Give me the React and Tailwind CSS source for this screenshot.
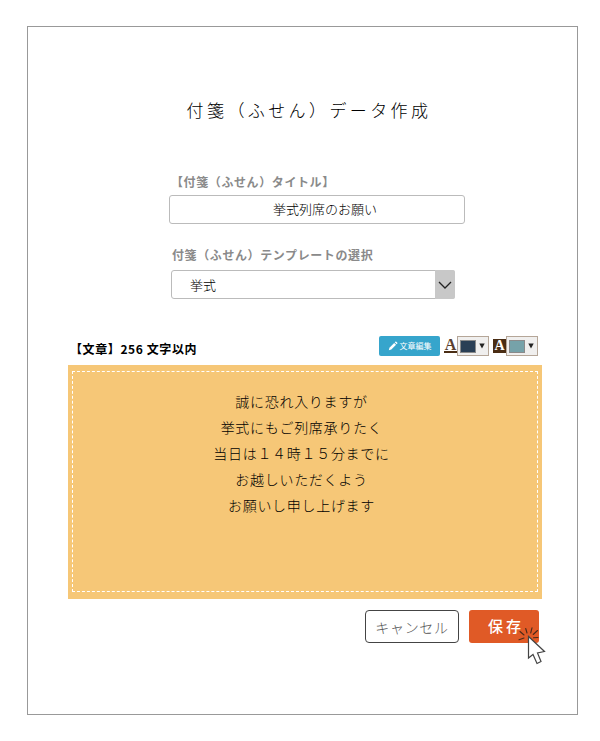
import React, { useState } from 'react';

const PencilIcon = () => (
  <svg viewBox="0 0 12 12" className="w-2.5 h-2.5" fill="currentColor" aria-hidden="true">
    <path d="M1 11l.7-3L7.4 2.300l2.300 2.300L4 10.300z" />
    <path d="M8.100 1.600l.8-.8c.3-.3.7-.3 1 0l1.300 1.300c.3.3.3.7 0 1l-.8.8z" />
  </svg>
);

const PointerIcon = () => (
  <svg viewBox="0 0 30 40" className="absolute left-12 top-4 w-[30px] h-10 pointer-events-none" aria-hidden="true">
    <g stroke="#4a2a1a" strokeWidth="1.100" fill="none" strokeLinecap="round">
      <path d="M7 9L3 5.500" />
      <path d="M10 7L8.700 2.500" />
      <path d="M13.700 7L15 1.800" />
      <path d="M16.200 8.500L20.500 4.500" />
      <path d="M16.500 11.700L21 11.500" />
      <path d="M7 12L2 13.700" />
    </g>
    <path
      d="M11.500 10.500V32L16 28.500L20 37.500L24 35.500L20.500 27L27.500 25.500Z"
      fill="#fff"
      stroke="#444"
      strokeWidth="1.200"
    />
  </svg>
);

const ColorPicker = ({ label, swatch }) => (
  <button
    type="button"
    aria-label={label}
    className="flex items-center gap-[3px] w-8 h-5 pl-0.5 border border-[#b5a698] bg-[#f0efee]"
  >
    <span className={`w-4 h-[13px] border border-[#8a8a8a] ${swatch}`}></span>
    <svg viewBox="0 0 6 6" className="w-1.5 h-1.5" fill="#222" aria-hidden="true">
      <path d="M0.300 0.500h5.400L3 5.500z" />
    </svg>
  </button>
);

const App = () => {
  const [title, setTitle] = useState('挙式列席のお願い');
  const [template, setTemplate] = useState('挙式');
  const [message, setMessage] = useState(
    '誠に恐れ入りますが\n挙式にもご列席承りたく\n当日は１４時１５分までに\nお越しいただくよう\nお願いし申し上げます'
  );

  return (
    <div className="min-h-screen bg-white pl-[27px] pr-[22px] py-[26px] font-['Noto_Sans_CJK_JP',sans-serif]">
      <form className="border border-[#999] pt-[69px] pb-[71px] pl-10 pr-[35px]" onSubmit={(e) => e.preventDefault()}>
        <h1 className="pl-2 text-center text-[17px] leading-7 font-light tracking-[0.2em] text-black">
          付箋（ふせん）データ作成
        </h1>

        <div className="mt-12 pl-[101px] pr-[77px]">
          <label htmlFor="title" className="block pl-0.5 text-xs leading-5 font-bold tracking-wider text-[#8a8a8a]">
            【付箋（ふせん）タイトル】
          </label>
          <input
            id="title"
            type="text"
            value={title}
            onChange={(e) => setTitle(e.target.value)}
            className="block mt-[3px] w-full h-[29px] pl-4 pb-0.5 rounded-[3px] border border-[#bbb] text-center text-[13px] font-light text-black"
          />

          <label htmlFor="template" className="block mt-[21px] pl-[3px] text-xs leading-5 font-bold tracking-wider text-[#8a8a8a]">
            付箋（ふせん）テンプレートの選択
          </label>
          <div className="relative mt-[5px] ml-0.5 mr-2.5">
            <select
              id="template"
              value={template}
              onChange={(e) => setTemplate(e.target.value)}
              className="block appearance-none w-full h-[29px] pl-[18px] rounded-[3px] border border-[#bbb] bg-white text-[13px] font-light text-black"
            >
              <option value="挙式">挙式</option>
            </select>
            <span className="absolute inset-y-0 right-0 flex items-center justify-center w-5 rounded-r-[2px] bg-[#c8c8c8] pointer-events-none">
              <svg viewBox="0 0 14 8" className="w-3.5 h-2" fill="none" stroke="#222" strokeWidth="1.300" aria-hidden="true">
                <path d="M1 1l6 6 6-6" />
              </svg>
            </span>
          </div>
        </div>

        <div className="flex items-start justify-between mt-[37px] pl-0.5 pr-1">
          <label htmlFor="message" className="pt-[3px] text-xs leading-5 font-bold tracking-wider text-black">
            【文章】256 文字以内
          </label>
          <div className="flex items-center">
            <button
              type="button"
              className="flex items-center justify-center gap-0.5 w-[61px] h-5 mr-1 rounded-[2px] bg-[#36a5cc] text-[8px] text-white"
            >
              <PencilIcon />
              文章編集
            </button>
            <span className="w-[13px] text-center font-['Liberation_Serif',serif] text-base leading-4 font-bold text-[#5a4030]">
              <span className="block border-b-2 border-[#4a2d14] leading-3">A</span>
            </span>
            <ColorPicker label="文字色" swatch="bg-[#2a3f55]" />
            <span className="w-[13px] h-3.5 ml-1 bg-[#4a2d14] text-center font-['Liberation_Serif',serif] text-sm leading-3.5 font-bold text-white">
              A
            </span>
            <ColorPicker label="背景色" swatch="bg-[#76a2a9]" />
          </div>
        </div>

        <div className="mt-1.5 px-1 pt-1.5 pb-[7px] bg-[#f6c777]">
          <textarea
            id="message"
            maxLength={256}
            value={message}
            onChange={(e) => setMessage(e.target.value)}
            className="block w-full h-[221px] pt-4 pr-[7px] resize-none border border-dashed border-white text-center text-sm leading-[26px] font-light tracking-wider text-black"
          />
        </div>

        <div className="flex justify-end gap-2.5 pt-[11px] pr-[3px]">
          <button
            type="button"
            className="w-[94px] h-[33px] rounded border border-[#444] bg-white text-sm font-light tracking-wider text-[#555]"
          >
            キャンセル
          </button>
          <div className="relative">
            <button
              type="submit"
              className="w-[70px] h-[33px] pl-1 rounded-[3px] bg-[#e05a26] text-[15px] font-medium tracking-[0.2em] text-white"
            >
              保存
            </button>
            <PointerIcon />
          </div>
        </div>
      </form>
    </div>
  );
};

export default App;
